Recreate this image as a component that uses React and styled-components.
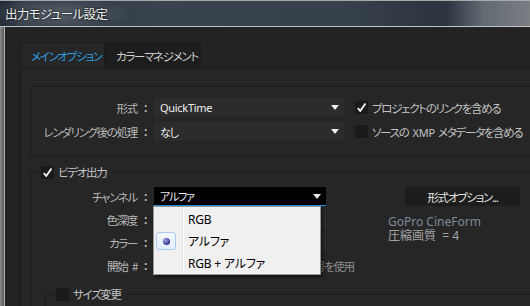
import { styled, css, createGlobalStyle } from 'styled-components';

const GlobalStyle = createGlobalStyle`
  html, body {
    margin: 0;
    padding: 0;
    background: #242424;
  }
  body {
    width: 530px;
    height: 306px;
    overflow: hidden;
    font-family: "Noto Sans", "Noto Sans CJK JP", sans-serif;
    font-feature-settings: "palt";
  }
`;

// narrow japanese UI text, close to Meiryo UI widths
const jp = css`
  font-family: "Noto Sans CJK JP", sans-serif;
  font-size: 11.5px;
  letter-spacing: -1.3px;
  white-space: nowrap;
`;

const Window = styled.div`
  width: 530px;
  height: 306px;
  display: flex;
  flex-direction: column;
  overflow: hidden;
`;

const TitleBar = styled.div`
  flex: none;
  height: 26px;
  box-sizing: border-box;
  border-top: 1px solid #a4a9ae;
  padding-left: 5px;
  display: flex;
  align-items: center;
  font-family: "Noto Sans CJK JP", sans-serif;
  font-size: 12.5px;
  letter-spacing: -0.6px;
  color: #f2f2f2;
  text-shadow: 0 0 2px #000, 0 0 4px rgba(0, 0, 0, 0.6);
  background:
    radial-gradient(ellipse 75px 16px at 56px 13px, rgba(125, 133, 142, 0.55), transparent),
    linear-gradient(to right, #1f2833 0, #313b47 4%, #39434e 30%, #37414c 65%, #2a333e 84%, #616a72 91%, #7a7e83 100%);
`;

const Frame = styled.div`
  flex: 1;
  min-height: 0;
  overflow: hidden;
  display: flex;
  flex-direction: column;
  border-top: 1px solid #c2c6ca;
  padding: 15px 0 0 20px;
  background: linear-gradient(to right, #8a8a8a 0, #5c5c5c 4px, #aeaeae 4px, #aeaeae 5px, #232323 5px);
`;

const TabRow = styled.div`
  flex: none;
  display: flex;
  height: 26px;
`;

const Tab = styled.div`
  ${jp};
  width: ${(p) => p.$width}px;
  box-sizing: border-box;
  padding-left: 10px;
  display: flex;
  align-items: center;
  color: ${(p) => (p.$active ? '#2e9ee0' : '#cfcfcf')};
  background: ${(p) => (p.$active ? '#262626' : '#1d1d1d')};
  border: 1px solid #1c1c1c;
  border-bottom: none;
`;

const TabPanel = styled.div`
  flex: 1;
  background: #262626;
  border-top: 1px solid #1b1b1b;
  border-left: 1px solid #1b1b1b;
  padding: 17px 0 0 9px;
`;

const Group = styled.div`
  width: 520px;
  border: 1px solid #1b1b1b;
  border-right: none;
  padding: 11px 0 14px 0;
  display: flex;
  flex-direction: column;
  gap: 5px;
`;

const Fieldset = styled.fieldset`
  margin: ${(p) => p.$top}px 0 0 ${(p) => p.$left}px;
  padding: 0;
  width: 540px;
  border: 1px solid #1b1b1b;
  border-right: none;
  min-width: 0;
`;

const Legend = styled.legend`
  ${jp};
  display: flex;
  align-items: center;
  gap: 4px;
  margin-left: ${(p) => p.$offset}px;
  padding: 0 6px 0 3px;
  height: 14px;
  color: #c4c4c4;
`;

const Row = styled.div`
  display: flex;
  align-items: center;
  height: 19px;
`;

const Label = styled.span`
  ${jp};
  flex: none;
  width: 106px;
  text-align: right;
  color: #b6b6b6;
`;

const Colon = styled.span`
  flex: none;
  width: 17px;
  box-sizing: border-box;
  padding-left: 7px;
  font-size: 12px;
  color: #b6b6b6;
  font-weight: bold;
`;

const Select = styled.div`
  position: relative;
  flex: none;
  width: ${(p) => p.$width}px;
  height: 19px;
  box-sizing: border-box;
  display: flex;
  align-items: center;
  justify-content: space-between;
  padding: 0 5px 0 6px;
  background: ${(p) => (p.$focused ? '#000' : '#2c2c2c')};
  border-bottom: ${(p) => (p.$focused ? '1px solid #1e8fe0' : 'none')};
  font-size: 11px;
  color: #ececec;
`;

const SelectText = styled.span`
  font-family: "Noto Sans", "Noto Sans CJK JP", sans-serif;
  letter-spacing: ${(p) => (p.$jp ? '-1.2px' : '-0.3px')};
`;

const Arrow = styled.span`
  width: 0;
  height: 0;
  border-left: 4px solid transparent;
  border-right: 4px solid transparent;
  border-top: 5px solid #eaeaea;
`;

const CheckBox = styled.span`
  width: 13px;
  height: 13px;
  flex: none;
  background: #1a1a1a;
  display: flex;
  align-items: center;
  justify-content: center;
`;

const CheckLabel = styled.label`
  ${jp};
  display: flex;
  align-items: center;
  gap: 4px;
  margin-left: 11px;
  color: #c2c2c2;
`;

const Latin = styled.span`
  font-family: "Noto Sans", sans-serif;
  font-size: 11px;
  letter-spacing: -0.2px;
  margin: 0 3px 0 4px;
`;

const VideoBody = styled.div`
  padding-top: 8px;
  display: flex;
  flex-direction: column;
`;

const VideoTop = styled.div`
  display: flex;
`;

const LeftCol = styled.div`
  width: 357px;
  flex: none;
  display: flex;
  flex-direction: column;
  gap: 4px;
`;

const RightCol = styled.div`
  display: flex;
  flex-direction: column;
`;

const Button = styled.div`
  ${jp};
  margin-left: 17px;
  width: 115px;
  height: 19px;
  background: #1d1d1d;
  display: flex;
  align-items: center;
  justify-content: center;
  color: #e4e4e4;
`;

const Info = styled.div`
  margin-top: ${(p) => p.$gap || 0}px;
  font-size: 12px;
  line-height: 14px;
  color: ${(p) => p.$color};
  white-space: pre;
`;

const StartField = styled.div`
  ${jp};
  width: 200px;
  text-align: right;
  color: #8c8c8c;
`;

const Menu = styled.div`
  position: absolute;
  top: 19px;
  left: -1px;
  width: 168px;
  box-sizing: border-box;
  background: #f0f0f0;
  border: 1px solid #979797;
  box-shadow: 2px 2px 3px rgba(0, 0, 0, 0.55);
  padding: 1px 0 0 2px;
  z-index: 5;
`;

const MenuList = styled.div`
  background: linear-gradient(to right, transparent 26px, #e2e3e3 26px, #e2e3e3 27px, #fff 27px, #fff 28px, transparent 28px);
`;

const MenuItem = styled.div`
  height: 22px;
  display: flex;
  align-items: center;
  font-size: 12px;
  letter-spacing: -0.2px;
  color: #000;
`;

const MenuIcon = styled.span`
  width: 28px;
  height: 100%;
  display: flex;
  align-items: center;
`;

const RadioBox = styled.span`
  width: 20px;
  height: 18px;
  box-sizing: border-box;
  border: 1px solid #a9c9ef;
  border-radius: 3px;
  background: linear-gradient(#f4f8fd, #e2edfa);
  display: flex;
  align-items: center;
  justify-content: center;
`;

const Dot = styled.span`
  width: 7px;
  height: 7px;
  border-radius: 50%;
  background: radial-gradient(circle at 35% 35%, #a4a4e8, #2f2f8f 70%);
`;

const MenuText = styled.span`
  padding-left: 4px;
  font-family: "Noto Sans", "Noto Sans CJK JP", sans-serif;
`;

const Spacer = styled.div`
  height: 30px;
`;

const Check = () => (
  <svg width="11" height="11" viewBox="0 0 11 11">
    <path d="M1.8 6 L4.2 9 L9.5 1.5" fill="none" stroke="#f2f2f2" strokeWidth="1.9" strokeLinejoin="round" />
  </svg>
);

const FormRow = ({ label, children }) => (
  <Row>
    <Label>{label}</Label>
    <Colon>:</Colon>
    {children}
  </Row>
);

export default function App() {
  return (
    <>
      <GlobalStyle />
      <Window>
        <TitleBar>出力モジュール設定</TitleBar>
        <Frame>
          <TabRow>
            <Tab $active $width={85}>メインオプション</Tab>
            <Tab $width={96}>カラーマネジメント</Tab>
          </TabRow>
          <TabPanel>
            <Group>
              <FormRow label="形式">
                <Select $width={190}>
                  <SelectText>QuickTime</SelectText>
                  <Arrow />
                </Select>
                <CheckLabel>
                  <CheckBox><Check /></CheckBox>
                  プロジェクトのリンクを含める
                </CheckLabel>
              </FormRow>
              <FormRow label="レンダリング後の処理">
                <Select $width={190}>
                  <SelectText $jp>なし</SelectText>
                  <Arrow />
                </Select>
                <CheckLabel>
                  <CheckBox />
                  <span>ソースの<Latin>XMP</Latin>メタデータを含める</span>
                </CheckLabel>
              </FormRow>
            </Group>

            <Fieldset $top={9} $left={0}>
              <Legend $offset={7}>
                <CheckBox><Check /></CheckBox>
                ビデオ出力
              </Legend>
              <VideoBody>
                <VideoTop>
                  <LeftCol>
                    <FormRow label="チャンネル">
                      <Select $width={172} $focused>
                        <SelectText $jp>アルファ</SelectText>
                        <Arrow />
                        <Menu>
                          <MenuList>
                            <MenuItem>
                              <MenuIcon />
                              <MenuText>RGB</MenuText>
                            </MenuItem>
                            <MenuItem>
                              <MenuIcon>
                                <RadioBox><Dot /></RadioBox>
                              </MenuIcon>
                              <MenuText>アルファ</MenuText>
                            </MenuItem>
                            <MenuItem>
                              <MenuIcon />
                              <MenuText>RGB + アルファ</MenuText>
                            </MenuItem>
                          </MenuList>
                        </Menu>
                      </Select>
                    </FormRow>
                    <FormRow label="色深度">
                      <Select $width={172}>
                        <SelectText>8 bit</SelectText>
                        <Arrow />
                      </Select>
                    </FormRow>
                    <FormRow label="カラー">
                      <Select $width={172}>
                        <SelectText $jp>ストレート</SelectText>
                        <Arrow />
                      </Select>
                    </FormRow>
                    <FormRow label={'開始\u2002#'}>
                      <StartField>ソースのフレーム番号を使用</StartField>
                    </FormRow>
                  </LeftCol>
                  <RightCol>
                    <Button>形式オプション...</Button>
                    <Info $gap={9} $color="#7f8a99">GoPro CineForm</Info>
                    <Info $color="#a4a4a4">圧縮画質  = 4</Info>
                  </RightCol>
                </VideoTop>
                <Fieldset $top={12} $left={14}>
                  <Legend $offset={7}>
                    <CheckBox />
                    サイズ変更
                  </Legend>
                  <Spacer />
                </Fieldset>
              </VideoBody>
            </Fieldset>
          </TabPanel>
        </Frame>
      </Window>
    </>
  );
}
